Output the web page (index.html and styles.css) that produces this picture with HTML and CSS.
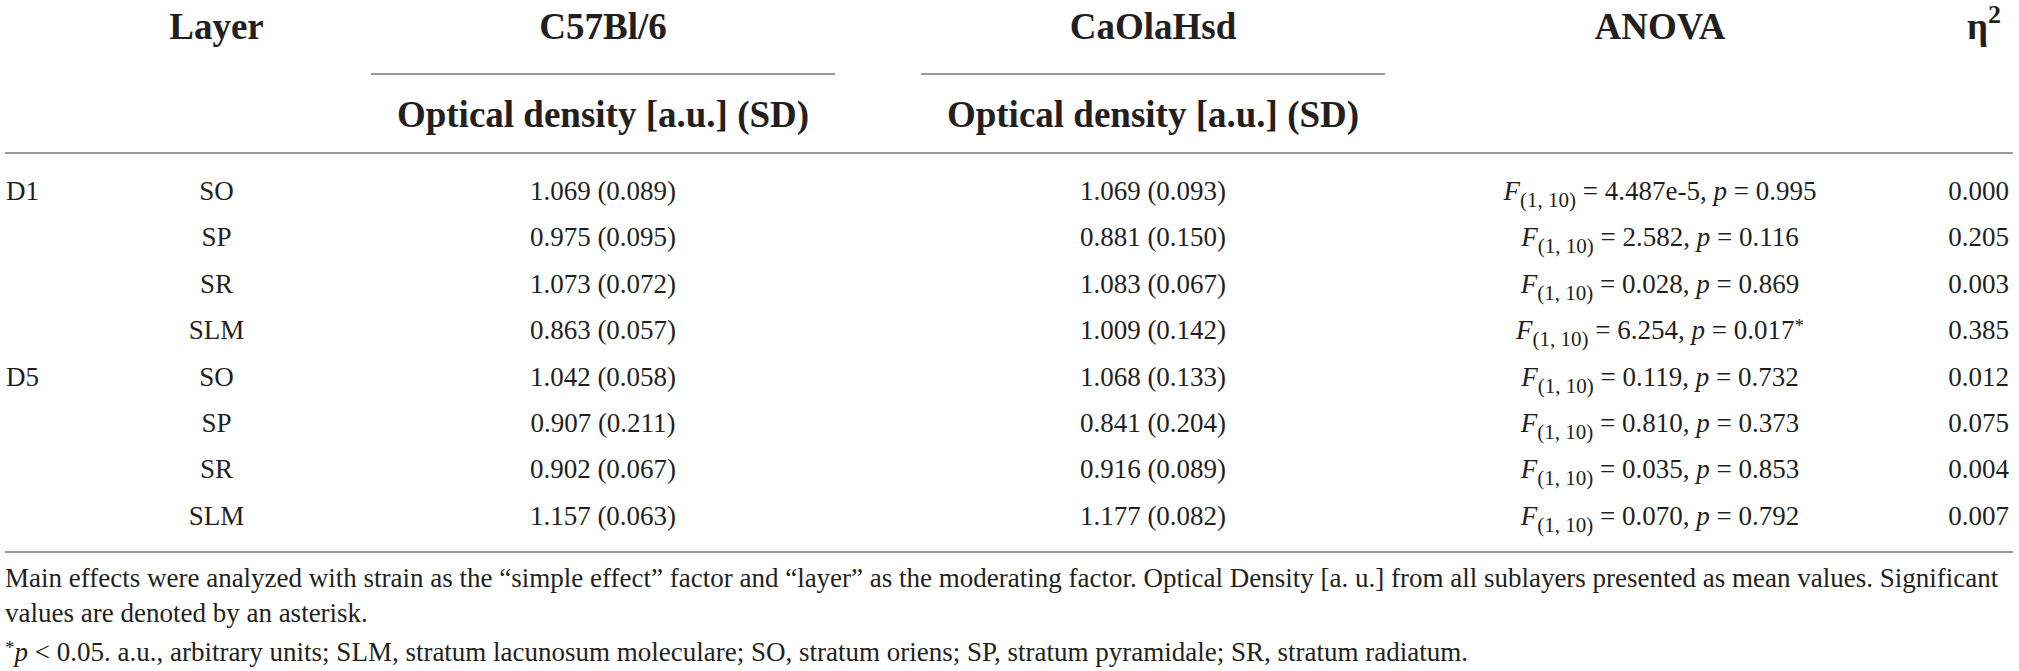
FILE: index.html
```html
<!DOCTYPE html>
<html lang="en">
<head>
  <meta charset="UTF-8">
  <meta name="viewport" content="width=device-width, initial-scale=1.0">
  <title>Optical density by layer</title>
  <link rel="stylesheet" href="styles.css">
</head>
<body>
  <div class="table-wrap">
    <table class="results">
      <colgroup>
        <col class="col-group">
        <col class="col-layer">
        <col class="col-strain">
        <col class="col-strain">
        <col class="col-anova">
        <col class="col-eta">
      </colgroup>
      <thead>
        <tr class="head-top">
          <th></th>
          <th>Layer</th>
          <th><div class="strain-name">C57Bl/6</div></th>
          <th><div class="strain-name">CaOlaHsd</div></th>
          <th>ANOVA</th>
          <th class="eta">η<sup>2</sup></th>
        </tr>
        <tr class="head-sub">
          <th></th>
          <th></th>
          <th>Optical density [a.u.] (SD)</th>
          <th>Optical density [a.u.] (SD)</th>
          <th></th>
          <th></th>
        </tr>
      </thead>
      <tbody>
        <tr>
          <td class="group">D1</td>
          <td>SO</td>
          <td>1.069 (0.089)</td>
          <td>1.069 (0.093)</td>
          <td><i>F</i><sub>(1, 10)</sub> = 4.487e-5, <i>p</i> = 0.995</td>
          <td class="eta">0.000</td>
        </tr>
        <tr>
          <td class="group"></td>
          <td>SP</td>
          <td>0.975 (0.095)</td>
          <td>0.881 (0.150)</td>
          <td><i>F</i><sub>(1, 10)</sub> = 2.582, <i>p</i> = 0.116</td>
          <td class="eta">0.205</td>
        </tr>
        <tr>
          <td class="group"></td>
          <td>SR</td>
          <td>1.073 (0.072)</td>
          <td>1.083 (0.067)</td>
          <td><i>F</i><sub>(1, 10)</sub> = 0.028, <i>p</i> = 0.869</td>
          <td class="eta">0.003</td>
        </tr>
        <tr>
          <td class="group"></td>
          <td>SLM</td>
          <td>0.863 (0.057)</td>
          <td>1.009 (0.142)</td>
          <td><i>F</i><sub>(1, 10)</sub> = 6.254, <i>p</i> = 0.017<span class="star">*</span></td>
          <td class="eta">0.385</td>
        </tr>
        <tr>
          <td class="group">D5</td>
          <td>SO</td>
          <td>1.042 (0.058)</td>
          <td>1.068 (0.133)</td>
          <td><i>F</i><sub>(1, 10)</sub> = 0.119, <i>p</i> = 0.732</td>
          <td class="eta">0.012</td>
        </tr>
        <tr>
          <td class="group"></td>
          <td>SP</td>
          <td>0.907 (0.211)</td>
          <td>0.841 (0.204)</td>
          <td><i>F</i><sub>(1, 10)</sub> = 0.810, <i>p</i> = 0.373</td>
          <td class="eta">0.075</td>
        </tr>
        <tr>
          <td class="group"></td>
          <td>SR</td>
          <td>0.902 (0.067)</td>
          <td>0.916 (0.089)</td>
          <td><i>F</i><sub>(1, 10)</sub> = 0.035, <i>p</i> = 0.853</td>
          <td class="eta">0.004</td>
        </tr>
        <tr>
          <td class="group"></td>
          <td>SLM</td>
          <td>1.157 (0.063)</td>
          <td>1.177 (0.082)</td>
          <td><i>F</i><sub>(1, 10)</sub> = 0.070, <i>p</i> = 0.792</td>
          <td class="eta">0.007</td>
        </tr>
      </tbody>
    </table>

    <div class="notes">
      <p>Main effects were analyzed with strain as the “simple effect” factor and “layer” as the moderating factor. Optical Density [a. u.] from all sublayers presented as mean values. Significant values are denoted by an asterisk.</p>
      <p><span class="star">*</span><i>p</i> &lt; 0.05. a.u., arbitrary units; SLM, stratum lacunosum moleculare; SO, stratum oriens; SP, stratum pyramidale; SR, stratum radiatum.</p>
    </div>
  </div>
</body>
</html>
```

FILE: styles.css
```css
body {
  margin: 0;
  background: #fff;
  color: #231f20;
  font-family: "Liberation Serif", "Times New Roman", serif;
}

.table-wrap {
  width: 2008px;
  padding-left: 5px;
}

.results {
  width: 2008px;
  border-collapse: collapse;
  table-layout: fixed;
}

.col-group { width: 100px; }
.col-layer { width: 223px; }
.col-strain { width: 550px; }
.col-anova { width: 464px; }
.col-eta { width: 121px; }

/* header */
.results th {
  font-size: 37px;
  font-weight: bold;
  line-height: 40px;
  text-align: center;
  vertical-align: top;
  padding: 0;
  white-space: nowrap;
}

.head-top th {
  padding-top: 7px;
}

.strain-name {
  margin: 0 43px;
  padding-bottom: 26px;
  border-bottom: 2px solid #9a9a9a;
}

.head-sub th {
  padding: 20px 0 17px;
  border-bottom: 2px solid #9a9a9a;
}

.results th.eta {
  text-align: right;
  padding-right: 12px;
}

.results th sup {
  font-size: 0.7em;
  line-height: 0;
  vertical-align: 0.6em;
}

/* body */
.results td {
  font-size: 27px;
  line-height: 30.4px;
  padding: 8px 0;
  text-align: center;
  white-space: nowrap;
}

.results tbody tr:first-child td {
  padding-top: 22px;
}

.results tbody tr:last-child td {
  padding-bottom: 20px;
  border-bottom: 2px solid #9a9a9a;
}

.results td.group {
  text-align: left;
  padding-left: 1px;
}

.results td.eta {
  text-align: right;
  padding-right: 4px;
}

.results sub {
  font-size: 0.78em;
  line-height: 0;
  vertical-align: -0.32em;
}

.star {
  font-size: 0.7em;
  vertical-align: 0.35em;
  line-height: 0;
}

/* footnotes */
.notes {
  margin-top: 8px;
  font-size: 27px;
  line-height: 35px;
}

.notes p {
  margin: 0;
}

.notes p + p {
  margin-top: 4px;
}
```
